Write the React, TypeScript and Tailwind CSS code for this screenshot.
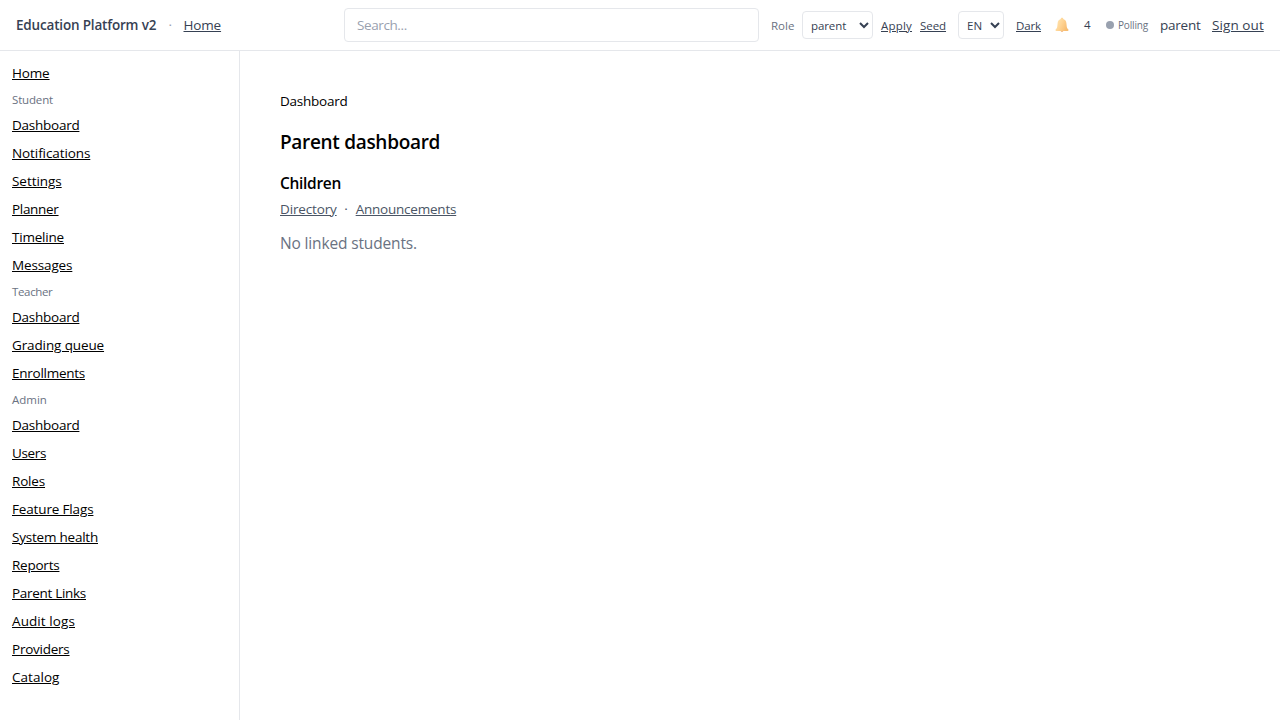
import React from "react";

type NavEntry = { label: string; tracking: string };
type NavGroup = { title: string; tracking: string; items: NavEntry[] };

const groups: NavGroup[] = [
  {
    title: "Student",
    tracking: "tracking-[-0.16px]",
    items: [
      { label: "Dashboard", tracking: "tracking-[-0.25px]" },
      { label: "Notifications", tracking: "tracking-[-0.09px]" },
      { label: "Settings", tracking: "tracking-[-0.05px]" },
      { label: "Planner", tracking: "tracking-[-0.31px]" },
      { label: "Timeline", tracking: "tracking-[-0.2px]" },
      { label: "Messages", tracking: "tracking-[-0.14px]" },
    ],
  },
  {
    title: "Teacher",
    tracking: "tracking-[-0.35px]",
    items: [
      { label: "Dashboard", tracking: "tracking-[-0.25px]" },
      { label: "Grading queue", tracking: "tracking-[-0.12px]" },
      { label: "Enrollments", tracking: "tracking-[-0.26px]" },
    ],
  },
  {
    title: "Admin",
    tracking: "tracking-normal",
    items: [
      { label: "Dashboard", tracking: "tracking-[-0.25px]" },
      { label: "Users", tracking: "tracking-[-0.35px]" },
      { label: "Roles", tracking: "tracking-[-0.17px]" },
      { label: "Feature Flags", tracking: "tracking-[-0.15px]" },
      { label: "System health", tracking: "tracking-[-0.22px]" },
      { label: "Reports", tracking: "tracking-[-0.23px]" },
      { label: "Parent Links", tracking: "tracking-[-0.3px]" },
      { label: "Audit logs", tracking: "tracking-[0.09px]" },
      { label: "Providers", tracking: "tracking-[-0.24px]" },
      { label: "Catalog", tracking: "tracking-[0.04px]" },
    ],
  },
];

function Bell() {
  return (
    <svg className="mr-[15px] shrink-0" width="14" height="16" viewBox="0 0 14 16" aria-hidden="true">
      <defs>
        <linearGradient id="bell" x1="0" y1="0" x2="1" y2="0.5">
          <stop offset="0" stopColor="#ffe9b8" />
          <stop offset="0.55" stopColor="#ffd494" />
          <stop offset="1" stopColor="#f8bd72" />
        </linearGradient>
      </defs>
      <circle cx="7" cy="13.6" r="1.4" fill="#efb27a" />
      <path
        d="M7 .8c.8 0 1.200.5 1.300 1.100 2 .6 2.900 2.200 3.100 4.300l.4 3.700c.1 1 .6 1.700 1.400 2.300.5.400.4 1.700-.4 1.700H1.200c-.8 0-.9-1.300-.4-1.700.8-.6 1.300-1.300 1.400-2.300l.4-3.700c.2-2.100 1.100-3.700 3.100-4.300C5.800 1.300 6.200.8 7 .8Z"
        fill="url(#bell)"
      />
    </svg>
  );
}

export default function App() {
  return (
    <div className="flex h-screen flex-col overflow-hidden bg-white font-['Open_Sans',sans-serif] text-black">
      <header className="flex h-[51px] shrink-0 items-center border-b border-gray-200 px-4 text-[13.5px]/5 whitespace-nowrap text-gray-700">
        <span className="w-[141px] font-semibold tracking-[-0.18px]">Education Platform v2</span>
        <span className="w-[26.5px] text-center text-gray-400">·</span>
        <a className="tracking-[-0.15px] underline">Home</a>
        <input
          placeholder="Search..."
          className="mr-3 ml-auto h-[34px] w-[415px] rounded border border-gray-200 px-3 tracking-[-0.4px] placeholder:text-gray-400"
        />
        <div className="flex w-[493px] shrink-0 items-center text-[11.5px]/4">
          <span className="w-[31px] pt-px text-gray-500">Role</span>
          <select className="mr-2 h-7 w-[71px] rounded border border-gray-200 bg-white pl-1 tracking-[-0.1px]">
            <option>parent</option>
          </select>
          <a className="mr-2 w-[31px] pt-px tracking-[0.2px] underline">Apply</a>
          <a className="mr-3 w-[26px] pt-px tracking-[-0.06px] underline">Seed</a>
          <select className="mr-3 h-7 w-[46px] rounded border border-gray-200 bg-white pl-1">
            <option>EN</option>
          </select>
          <a className="mr-[14px] w-[25px] pt-px tracking-[-0.12px] underline">Dark</a>
          <Bell />
          <span className="mr-[15px] w-[7px]">4</span>
          <span className="mr-1 size-2 shrink-0 rounded-full bg-gray-400" />
          <span className="w-[42px] text-[10px] tracking-[-0.17px] text-gray-500">Polling</span>
          <span className="w-[52px] text-[13.5px]/5 tracking-[-0.24px]">parent</span>
          <a className="text-[13.5px]/5 tracking-[0.08px] underline">Sign out</a>
        </div>
      </header>
      <div className="flex min-h-0 flex-1">
        <aside className="flex w-60 shrink-0 flex-col items-start gap-2 border-r border-gray-200 p-3 text-[13.5px]/5">
          <a className="tracking-[-0.15px] underline">Home</a>
          {groups.map((group) => (
            <React.Fragment key={group.title}>
              <span className={`-mb-px pt-px text-[11.5px]/4 text-gray-500 ${group.tracking}`}>{group.title}</span>
              {group.items.map((item) => (
                <a key={item.label} className={`underline ${item.tracking}`}>
                  {item.label}
                </a>
              ))}
            </React.Fragment>
          ))}
        </aside>
        <main className="flex-1 p-10">
          <div className="text-[13.5px]/5 tracking-[-0.25px]">Dashboard</div>
          <h1 className="mt-[17px] text-[19px]/7 font-semibold tracking-[-0.31px]">Parent dashboard</h1>
          <h2 className="mt-[15px] text-[15.5px]/6 font-semibold tracking-[-0.31px]">Children</h2>
          <div className="mt-1 flex text-[13.5px]/5 text-gray-600">
            <a className="tracking-[-0.15px] underline">Directory</a>
            <span className="w-[19px] text-center">·</span>
            <a className="tracking-[-0.22px] underline">Announcements</a>
          </div>
          <p className="mt-3 text-[15.5px]/6 tracking-[-0.15px] text-gray-500">No linked students.</p>
        </main>
      </div>
    </div>
  );
}
